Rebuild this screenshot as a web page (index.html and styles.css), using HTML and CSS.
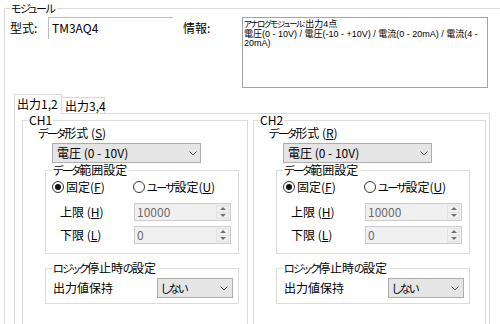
FILE: index.html
```html
<!DOCTYPE html>
<html lang="ja">
<head>
<meta charset="utf-8">
<link rel="stylesheet" href="styles.css">
</head>
<body>
<fieldset class="module">
  <legend><span class="kn">モジュール</span></legend>
  <div class="mod-row">
    <span class="lbl lbl-model">型式:</span>
    <div class="model-box">TM3AQ4</div>
    <span class="lbl lbl-info">情報:</span>
    <div class="info-box"><span class="kn">アナログモジュール</span>:出力4点<br>電圧(0 - 10V) / 電圧(-10 - +10V) / 電流(0 - 20mA) / 電流(4 -<br>20mA)</div>
  </div>
  <div class="tabs">
    <div class="tab active">出力1,2</div>
    <div class="tab">出力3,4</div>
  </div>
  <div class="panel">
    <fieldset class="ch ch1">
      <legend>CH1</legend>
      <div class="dtype-lbl"><span class="kn">データ</span>形式 (<u>S</u>)</div>
      <div class="combo combo-type"><span class="combo-text">電圧 (0 - 10V)</span><svg class="chev" width="8" height="5" viewBox="0 0 8 5"><polyline points="0.5,0.5 4,4 7.5,0.5" fill="none" stroke="#555" stroke-width="1"/></svg></div>
      <fieldset class="sub range">
        <legend><span class="kn">データ</span>範囲設定</legend>
        <div class="radios">
          <div class="radio r-fixed"><span class="circle checked"></span>固定(<u>F</u>)</div>
          <div class="radio"><span class="circle"></span><span class="kn">ユーザ</span>設定(<u>U</u>)</div>
        </div>
        <div class="limit-row first">
          <span class="limit-lbl">上限 (<u>H</u>)</span>
          <div class="spin"><span class="spin-val">10000</span><span class="spin-btns"><span class="sb"><i class="up"></i></span><span class="sb"><i class="down"></i></span></span></div>
        </div>
        <div class="limit-row">
          <span class="limit-lbl">下限 (<u>L</u>)</span>
          <div class="spin"><span class="spin-val">0</span><span class="spin-btns"><span class="sb"><i class="up"></i></span><span class="sb"><i class="down"></i></span></span></div>
        </div>
      </fieldset>
      <fieldset class="sub logic">
        <legend><span class="kn">ロジック</span>停止時<span class="kn">の</span>設定</legend>
        <div class="logic-row">
          <span class="logic-lbl">出力値保持</span>
          <div class="combo combo-hold"><span class="combo-text kn">しない</span><svg class="chev" width="8" height="5" viewBox="0 0 8 5"><polyline points="0.5,0.5 4,4 7.5,0.5" fill="none" stroke="#555" stroke-width="1"/></svg></div>
        </div>
      </fieldset>
    </fieldset>
    <fieldset class="ch ch2">
      <legend>CH2</legend>
      <div class="dtype-lbl"><span class="kn">データ</span>形式 (<u>R</u>)</div>
      <div class="combo combo-type"><span class="combo-text">電圧 (0 - 10V)</span><svg class="chev" width="8" height="5" viewBox="0 0 8 5"><polyline points="0.5,0.5 4,4 7.5,0.5" fill="none" stroke="#555" stroke-width="1"/></svg></div>
      <fieldset class="sub range">
        <legend><span class="kn">データ</span>範囲設定</legend>
        <div class="radios">
          <div class="radio r-fixed"><span class="circle checked"></span>固定(<u>F</u>)</div>
          <div class="radio"><span class="circle"></span><span class="kn">ユーザ</span>設定(<u>U</u>)</div>
        </div>
        <div class="limit-row first">
          <span class="limit-lbl">上限 (<u>H</u>)</span>
          <div class="spin"><span class="spin-val">10000</span><span class="spin-btns"><span class="sb"><i class="up"></i></span><span class="sb"><i class="down"></i></span></span></div>
        </div>
        <div class="limit-row">
          <span class="limit-lbl">下限 (<u>L</u>)</span>
          <div class="spin"><span class="spin-val">0</span><span class="spin-btns"><span class="sb"><i class="up"></i></span><span class="sb"><i class="down"></i></span></span></div>
        </div>
      </fieldset>
      <fieldset class="sub logic">
        <legend><span class="kn">ロジック</span>停止時<span class="kn">の</span>設定</legend>
        <div class="logic-row">
          <span class="logic-lbl">出力値保持</span>
          <div class="combo combo-hold"><span class="combo-text kn">しない</span><svg class="chev" width="8" height="5" viewBox="0 0 8 5"><polyline points="0.5,0.5 4,4 7.5,0.5" fill="none" stroke="#555" stroke-width="1"/></svg></div>
        </div>
      </fieldset>
    </fieldset>
  </div>
</fieldset>
</body>
</html>
```
FILE: styles.css
```css
* { box-sizing: border-box; }
html, body { margin: 0; padding: 0; }
body {
  width: 500px;
  height: 324px;
  overflow: hidden;
  background: #fff;
  font-family: "Noto Sans CJK JP", "Liberation Sans", sans-serif;
  font-size: 12px;
  color: #000;
  font-feature-settings: "palt" 1;
}
u { text-decoration: underline; text-underline-offset: 1px; }
/* narrower kana, as in the Meiryo UI face of the original */
.kn { font-size: 0.92em; letter-spacing: -0.14em; }

fieldset { margin: 0; min-width: 0; border: 1px solid #dcdcdc; }
legend { padding: 0 1px; }

.module {
  margin: 1px 0 0 4px;
  padding: 2px 0 0 5px;
  width: 496px;
  height: 323px;
  border-right: none;
  border-bottom: none;
}
.module > legend { line-height: 14px; padding: 0 3px 0 1px; }

.mod-row { display: flex; align-items: flex-start; height: 71px; }
.lbl { line-height: 14px; margin-top: 4px; }
.lbl-model { width: 38px; }
.model-box {
  width: 125px;
  height: 22px;
  border-top: 1px solid #bdbdbd;
  border-left: 1px solid #bdbdbd;
  padding: 3px 0 0 3px;
  line-height: 14px;
}
.lbl-info { width: 59px; margin-left: 10px; }
.info-box {
  width: 246px;
  height: 71px;
  border: 1px solid #a5a5a5;
  padding: 2px 1px;
  font-family: "Liberation Sans", "Noto Sans CJK JP", sans-serif;
  font-size: 9px;
  line-height: 9.5px;
  white-space: nowrap;
  overflow: hidden;
}

.tabs { display: flex; align-items: flex-end; margin: 6px 0 0 4px; height: 19px; }
.tab {
  height: 16px;
  width: 43px;
  border: 1px solid #d9d9d9;
  border-left: none;
  border-bottom: none;
  background: #fff;
  padding: 1px 0 0 3px;
  line-height: 14px;
  white-space: nowrap;
}
.tab.active {
  position: relative;
  z-index: 1;
  height: 20px;
  width: 48px;
  border-left: 1px solid #d9d9d9;
  margin-bottom: -1px;
  padding: 2px 0 0 2px;
}

.panel {
  margin-left: 4px;
  width: 476px;
  height: 211px;
  border: 1px solid #d9d9d9;
  border-bottom: none;
  display: flex;
  align-items: flex-start;
  gap: 5px;
  padding: 0 3px 0 7px;
}
.ch { padding: 0 0 0 5px; height: 210px; border-bottom: none; }
.ch1 { width: 226px; }
.ch2 { width: 233px; }
.ch > legend { line-height: 12px; }

.dtype-lbl { margin-left: 10px; line-height: 14px; }
.combo {
  display: flex;
  align-items: center;
  justify-content: space-between;
  background: #e5e5e5;
  border: 1px solid #adadad;
  height: 20px;
  line-height: 14px;
}
.combo-type { margin: 3px 0 0 24px; width: 149px; padding: 0 3px 0 4px; }
.combo-hold { width: 76px; height: 20px; padding: 0 4px 0 3px; }
.chev { display: block; }

.sub { margin-left: 17px; width: 194px; }
.sub > legend { line-height: 14px; padding: 0 3px 0 1px; }
.range { padding: 0 7px 9px 6px; }
.radios { display: flex; margin-top: 2px; height: 16px; align-items: center; line-height: 14px; }
.radio { display: flex; align-items: center; flex-shrink: 0; white-space: nowrap; }
.r-fixed { width: 81px; }
.circle {
  width: 12px;
  height: 12px;
  border: 1px solid #333;
  border-radius: 50%;
  margin-right: 2px;
  display: flex;
  align-items: center;
  justify-content: center;
  background: #fff;
}
.circle.checked::after {
  content: "";
  width: 6px;
  height: 6px;
  border-radius: 50%;
  background: #111;
}

.limit-row { display: flex; align-items: center; margin-top: 5px; height: 18px; line-height: 14px; }
.limit-row.first { margin-top: 8px; }
.limit-lbl { margin-left: 8px; width: 74px; }
.spin {
  width: 97px;
  height: 18px;
  border: 1px solid #cccccc;
  background: #f0f0f0;
  display: flex;
  color: #6d6d6d;
}
.spin-val { flex: 1; padding: 1px 0 0 2px; line-height: 14px; }
.spin-btns { width: 13px; display: flex; flex-direction: column; margin: 1px 1px 1px 0; }
.sb {
  flex: 1;
  display: flex;
  align-items: center;
  justify-content: center;
  border: 1px solid #e2e2e2;
}
.sb + .sb { border-top: none; }
.up, .down { width: 0; height: 0; border-left: 3px solid transparent; border-right: 3px solid transparent; }
.up { border-bottom: 3px solid #707070; }
.down { border-top: 3px solid #707070; }

.logic { margin-top: 7px; padding: 0 5px 5px 6px; }
.logic-row { display: flex; align-items: center; margin-top: 3px; line-height: 14px; }
.logic-lbl { margin-left: 1px; width: 104px; }
```
